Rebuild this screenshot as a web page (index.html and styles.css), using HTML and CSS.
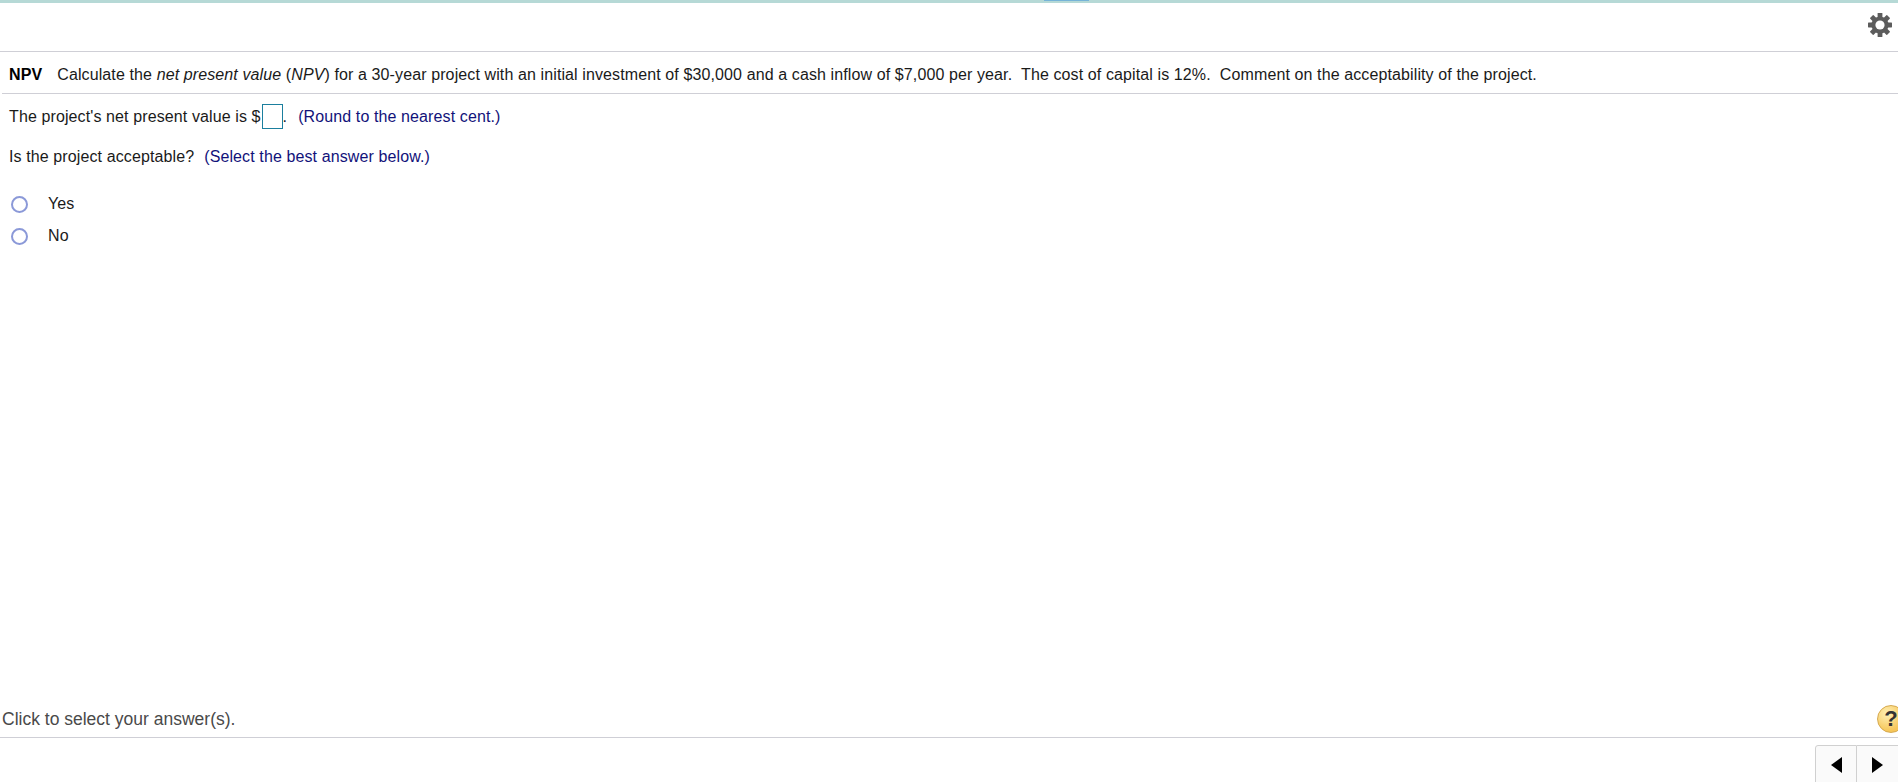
FILE: index.html
```html
<!DOCTYPE html>
<html lang="en">
<head>
<meta charset="utf-8">
<title>NPV question</title>
<link rel="stylesheet" href="styles.css">
</head>
<body>
<div class="page">
  <div class="topbar"><div class="topbar-mark"></div></div>
  <div class="toolbar">
    <svg class="gear" viewBox="-12 -12 24 24" width="24" height="24" aria-hidden="true">
      <g fill="#5c5c5c">
        <rect x="-2.4" y="-12" width="4.8" height="24" rx="0.6"/>
        <rect x="-2.4" y="-12" width="4.8" height="24" rx="0.6" transform="rotate(45)"/>
        <rect x="-2.4" y="-12" width="4.8" height="24" rx="0.6" transform="rotate(90)"/>
        <rect x="-2.4" y="-12" width="4.8" height="24" rx="0.6" transform="rotate(135)"/>
        <circle r="8.6"/>
      </g>
      <circle r="4.6" fill="#fff"/>
    </svg>
  </div>
  <div class="question">
    <p class="prompt"><b class="code">NPV</b>Calculate the <i>net present value</i> (<i>NPV</i>) for a 30-year project with an initial investment of $30,000 and a cash inflow of $7,000 per year.&nbsp; The cost of capital is 12%.&nbsp; Comment on the acceptability of the project.</p>
  </div>
  <div class="answers">
    <p class="line first">The project's net present value is $<span class="input"></span>.<span class="hint">(Round to the nearest cent.)</span></p>
    <p class="line second">Is the project acceptable?<span class="hint">(Select the best answer below.)</span></p>
    <ul class="options">
      <li class="option"><span class="radio"></span>Yes</li>
      <li class="option"><span class="radio"></span>No</li>
    </ul>
  </div>
  <div class="status">
    <span class="status-text">Click to select your answer(s).</span>
    <span class="help">?</span>
  </div>
  <div class="footer">
    <div class="pager">
      <span class="pager-btn"><span class="arrow left"></span></span>
      <span class="pager-btn"><span class="arrow right"></span></span>
    </div>
  </div>
</div>
</body>
</html>
```
FILE: styles.css
```css
html, body {
  margin: 0;
  padding: 0;
  height: 100%;
  overflow: hidden;
  background: #fff;
}
.page {
  display: flex;
  flex-direction: column;
  height: 782px;
  font-family: "Liberation Sans", Arial, sans-serif;
  font-size: 16px;
  letter-spacing: 0.11px;
  color: #1a1a1a;
}
.topbar {
  height: 3px;
  flex: none;
  background: #b6d9d6;
}
.topbar-mark {
  width: 45px;
  height: 1px;
  margin-left: 1044px;
  background: #76b4d8;
}
.toolbar {
  height: 48px;
  flex: none;
  display: flex;
  align-items: center;
  justify-content: flex-end;
  padding-right: 6px;
  border-bottom: 1px solid #cfcfd6;
}
.gear { margin-bottom: 4px; }
.question {
  margin-left: 2px;
  padding: 14px 0 0 7px;
  height: 27px;
  flex: none;
  border-bottom: 1px solid #cfcfd6;
}
.prompt {
  margin: 0;
  line-height: 18px;
  white-space: nowrap;
}
.code {
  color: #000;
  margin-right: 15px;
}
.answers {
  flex: 1;
  padding-left: 9px;
}
.line {
  margin: 0;
  line-height: 18px;
  white-space: nowrap;
}
.first { margin-top: 10px; display: flex; align-items: center; height: 26px; }
.second { margin-top: 18px; }
.input {
  display: block;
  width: 19px;
  height: 23px;
  margin: -2px 0 0 1px;
  border: 1px solid #1b7f9e;
}
.hint {
  color: #12127a;
  margin-left: 11px;
}
.second .hint { margin-left: 10px; }
.options {
  list-style: none;
  margin: 22px 0 0;
  padding: 0;
}
.option {
  display: flex;
  align-items: center;
  height: 32px;
}
.radio {
  width: 13px;
  height: 13px;
  margin: 0 20px 0 2px;
  border: 2px solid #8b99d8;
  border-radius: 50%;
  flex: none;
}
.status {
  flex: none;
  height: 33px;
  display: flex;
  align-items: center;
  justify-content: space-between;
  border-bottom: 1px solid #cfcfd6;
  padding-left: 2px;
  overflow: hidden;
}
.status-text {
  font-size: 17.5px;
  letter-spacing: 0;
  color: #4a4a4a;
  margin-top: -2px;
}
.help {
  flex: none;
  width: 26px;
  height: 26px;
  margin-right: -7px;
  margin-top: -3px;
  border: 1px solid #d6a94f;
  border-radius: 50%;
  background: radial-gradient(circle at 35% 30%, #fff0b5, #f6c659 70%);
  color: #333;
  font-weight: bold;
  font-size: 22px;
  line-height: 26px;
  text-align: center;
}
.footer {
  flex: none;
  height: 44px;
  display: flex;
  justify-content: flex-end;
  padding-top: 7px;
  box-sizing: border-box;
  overflow: hidden;
}
.pager {
  display: flex;
}
.pager-btn {
  width: 42px;
  height: 44px;
  display: flex;
  align-items: flex-start;
  justify-content: center;
  padding-top: 11px;
  box-sizing: border-box;
  background: #fafafa;
  border: 1px solid #d0d0d0;
}
.pager-btn:first-child {
  border-radius: 3px 0 0 0;
}
.pager-btn + .pager-btn {
  border-left: 0;
  border-right: 0;
  width: 41px;
}
.arrow {
  width: 0;
  height: 0;
  border-top: 8px solid transparent;
  border-bottom: 8px solid transparent;
}
.arrow.left { border-right: 11px solid #000; }
.arrow.right { border-left: 11px solid #000; }
```
